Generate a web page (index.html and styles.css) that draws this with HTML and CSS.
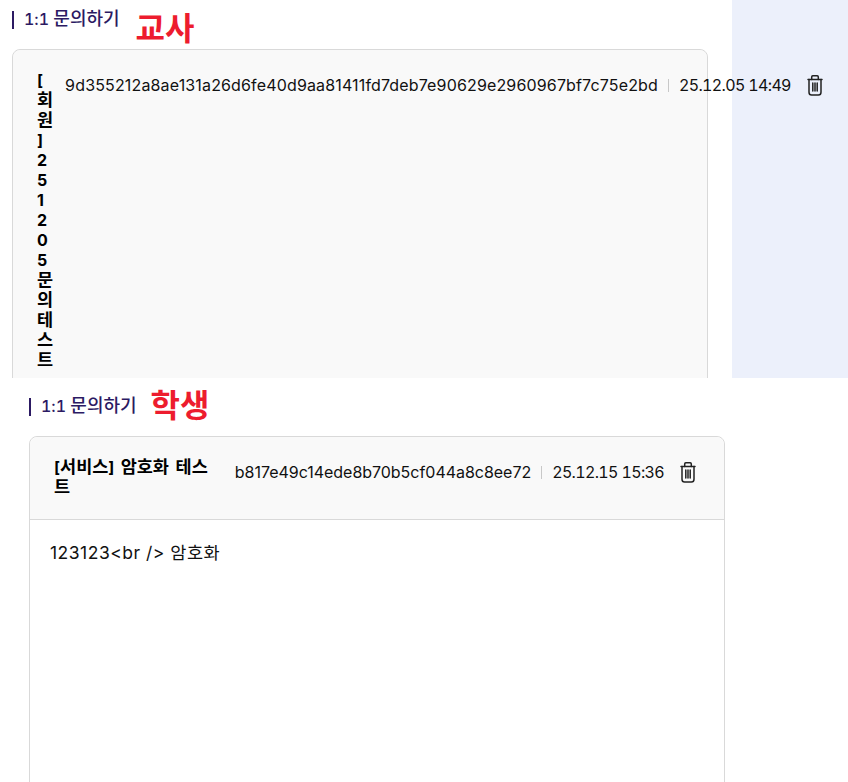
FILE: index.html
```html
<!DOCTYPE html>
<html lang="ko">
<head>
<meta charset="utf-8">
<title>1:1 문의하기</title>
<link rel="stylesheet" href="styles.css">
</head>
<body>
<section class="teacher">
  <main class="teacher-main">
    <div class="page-head">
      <h2 class="page-title">1:1 <span class="ko">문의하기</span></h2>
      <span class="role">교사</span>
    </div>
    <article class="card">
      <header class="card-head">
        <strong class="card-title">[<span class="ko">회원</span><span class="close">]</span>251205<span class="ko">문의테스트</span></strong>
        <div class="meta">
          <span class="hash hash-long">9d355212a8ae131a26d6fe40d9aa81411fd7deb7e90629e2960967bf7c75e2bd</span>
          <i class="sep"></i>
          <span class="date">25.12.05 14:49</span>
        </div>
        <button class="trash" aria-label="삭제">
          <svg viewBox="0 0 24 24" width="24" height="24" fill="none" stroke="#222" stroke-width="1.5" stroke-linejoin="round" stroke-linecap="round"><path d="M5 6.500h14"/><path d="M8.700 6.500V4c0-.8.4-1.200 1.100-1.200h4.400c.7 0 1.100.4 1.100 1.200v2.500"/><path d="M6 6.500v12.700c0 1.700 1 2.800 2.600 2.800h6.800c1.600 0 2.600-1.100 2.600-2.800V6.500"/><path d="M9.800 10v8M12 10v8M14.200 10v8"/></svg>
        </button>
      </header>
    </article>
  </main>
  <div class="side"></div>
</section>
<section class="student">
  <div class="page-head">
    <h2 class="page-title">1:1 <span class="ko">문의하기</span></h2>
    <span class="role">학생</span>
  </div>
  <article class="card card-full">
    <header class="card-head">
      <strong class="card-title">[<span class="ko">서비스</span>] <span class="ko">암호화 테스트</span></strong>
      <div class="meta">
        <span class="hash">b817e49c14ede8b70b5cf044a8c8ee72</span>
        <i class="sep"></i>
        <span class="date">25.12.15 15:36</span>
      </div>
      <button class="trash" aria-label="삭제">
        <svg viewBox="0 0 24 24" width="24" height="24" fill="none" stroke="#222" stroke-width="1.5" stroke-linejoin="round" stroke-linecap="round"><path d="M5 6.500h14"/><path d="M8.700 6.500V4c0-.8.4-1.200 1.100-1.200h4.400c.7 0 1.100.4 1.100 1.200v2.500"/><path d="M6 6.500v12.700c0 1.700 1 2.800 2.600 2.800h6.800c1.600 0 2.600-1.100 2.600-2.800V6.500"/><path d="M9.800 10v8M12 10v8M14.200 10v8"/></svg>
      </button>
    </header>
    <div class="card-body">123123&lt;br /&gt; 암호화</div>
  </article>
</section>
</body>
</html>
```
FILE: styles.css
```css
* { box-sizing: border-box; }
html, body { margin: 0; padding: 0; }
body {
  width: 848px;
  height: 782px;
  overflow: hidden;
  background: #fff;
  color: #111;
  font-family: Inter, "Noto Sans CJK KR", sans-serif;
  font-size: 16px;
}
.ko { font-size: 17.5px; }
.close { letter-spacing: 1.5px; }
.teacher {
  display: flex;
  height: 378px;
  overflow: hidden;
}
.teacher-main {
  position: relative;
  z-index: 1;
  flex: 0 0 732px;
  width: 732px;
  padding-left: 12px;
}
.side {
  flex: 1;
  background: #ecf0fb;
}
.page-head {
  display: flex;
  align-items: flex-start;
  height: 49px;
}
.page-title {
  margin: 11px 16px 0 0;
  padding-left: 10px;
  flex: none;
  border-left: 2px solid #2c1a63;
  height: 18px;
  line-height: 16px;
  font-size: 16px;
  font-weight: 500;
  font-feature-settings: "tnum";
  color: #2c1a63;
  white-space: nowrap;
}
.page-title .ko { font-size: 18px; }
.role {
  margin-top: 11px;
  color: #ed1c2e;
  font-size: 32px;
  font-weight: 700;
  line-height: 36px;
}
.card {
  width: 696px;
  border: 1px solid #d9d9d9;
  border-radius: 8px;
  background: #fff;
}
.teacher .card { min-height: 400px; background: #f9f9f9; }
.card-head {
  display: flex;
  align-items: flex-start;
  gap: 12px;
  padding: 20px 24px 22px;
  background: #f9f9f9;
  border-radius: 8px 8px 0 0;
}
.student .card-head { border-bottom: 1px solid #d9d9d9; }
.card-title {
  flex: 1 1 0;
  font-size: 16px;
  line-height: 20px;
  font-weight: 700;
  word-spacing: 2.5px;
  color: #000;
  word-break: break-all;
  line-break: anywhere;
}
.meta {
  flex: none;
  display: flex;
  align-items: center;
  gap: 10px;
  height: 30px;
  line-height: 30px;
  color: #111;
  white-space: nowrap;
}
.hash { letter-spacing: -.03px; }
.hash-long { letter-spacing: .15px; }
.date { font-feature-settings: "tnum"; letter-spacing: -.65px; }
.sep {
  display: block;
  width: 1px;
  height: 13px;
  background: #c8c8c8;
}
.trash {
  flex: none;
  width: 24px;
  height: 24px;
  margin: 3px 0 0 0;
  padding: 0;
  border: 0;
  background: none;
}
.trash svg { display: block; }
.student { padding-left: 29px; }
.student .page-head { height: 58px; }
.student .page-title { margin-top: 20px; margin-right: 14px; }
.student .role { margin-top: 10px; }
.card-full { height: 400px; }
.card-body {
  padding: 20px;
  font-size: 17.5px;
  letter-spacing: .5px;
  line-height: 26px;
  color: #111;
}
```
